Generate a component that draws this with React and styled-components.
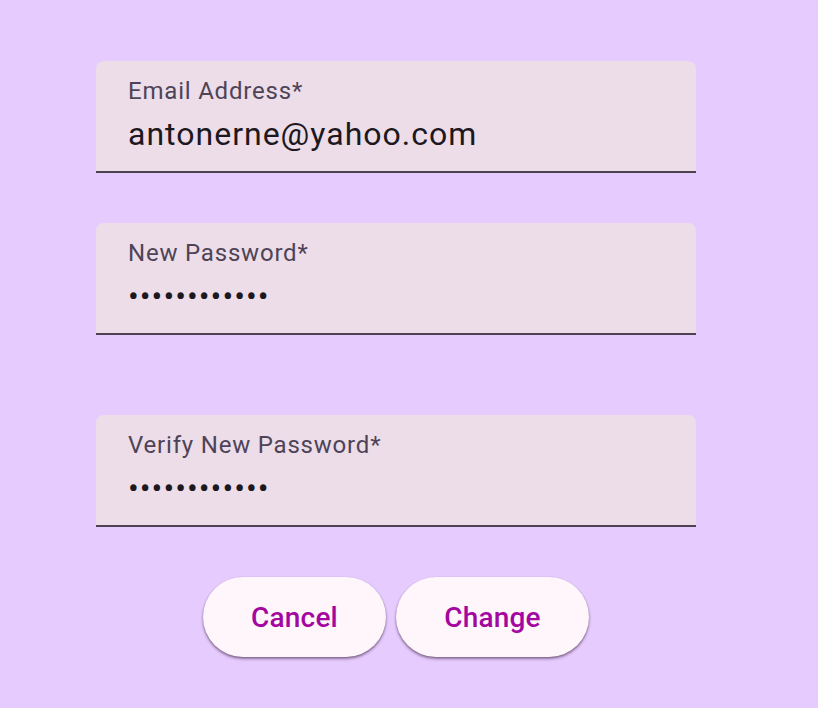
import React from "react";
import styled, { createGlobalStyle } from "styled-components";

const GlobalStyle = createGlobalStyle`
  html, body {
    margin: 0;
    padding: 0;
    background: #e6cbff;
    font-family: Roboto, "Noto Sans", sans-serif;
  }
`;

const Page = styled.div`
  width: 818px;
  height: 708px;
  box-sizing: border-box;
  padding: 61px 0 0 96px;
`;

const Form = styled.form`
  width: 600px;
  display: flex;
  flex-direction: column;
`;

const Field = styled.label`
  display: flex;
  flex-direction: column;
  height: 112px;
  box-sizing: border-box;
  padding: 14px 32px 0;
  margin-bottom: ${(p) => p.$after}px;
  background: #ecdde8;
  border-radius: 8px 8px 0 0;
  border-bottom: 2px solid #4e4250;
`;

const Label = styled.span`
  font-size: 24px;
  line-height: 32px;
  letter-spacing: 0.8px;
  color: #4e4357;
`;

const Input = styled.input`
  border: none;
  outline: none;
  background: transparent;
  padding: 0;
  margin-top: 7px;
  height: 40px;
  font-family: Roboto, sans-serif;
  font-size: 32px;
  line-height: 40px;
  letter-spacing: 1px;
  color: #1d1820;
`;

const Actions = styled.div`
  display: flex;
  justify-content: center;
  gap: 10px;
`;

const Button = styled.button`
  width: ${(p) => p.$w}px;
  height: 80px;
  border: none;
  border-radius: 40px;
  background: #fef6fb;
  color: #a3079f;
  font-family: Roboto, sans-serif;
  font-size: 28px;
  font-weight: 500;
  letter-spacing: 0.2px;
  box-shadow: 0 2px 3px rgba(60, 30, 60, 0.45), 0 1px 2px rgba(60, 30, 60, 0.3);
  cursor: pointer;
`;

export default function App() {
  return (
    <>
      <GlobalStyle />
      <Page>
        <Form onSubmit={(e) => e.preventDefault()}>
          <Field $after={50}>
            <Label>Email Address*</Label>
            <Input type="email" defaultValue="antonerne@yahoo.com" />
          </Field>
          <Field $after={80}>
            <Label>New Password*</Label>
            <Input type="password" defaultValue="password1234" />
          </Field>
          <Field $after={50}>
            <Label>Verify New Password*</Label>
            <Input type="password" defaultValue="password1234" />
          </Field>
          <Actions>
            <Button type="button" $w={183}>Cancel</Button>
            <Button type="submit" $w={193}>Change</Button>
          </Actions>
        </Form>
      </Page>
    </>
  );
}
